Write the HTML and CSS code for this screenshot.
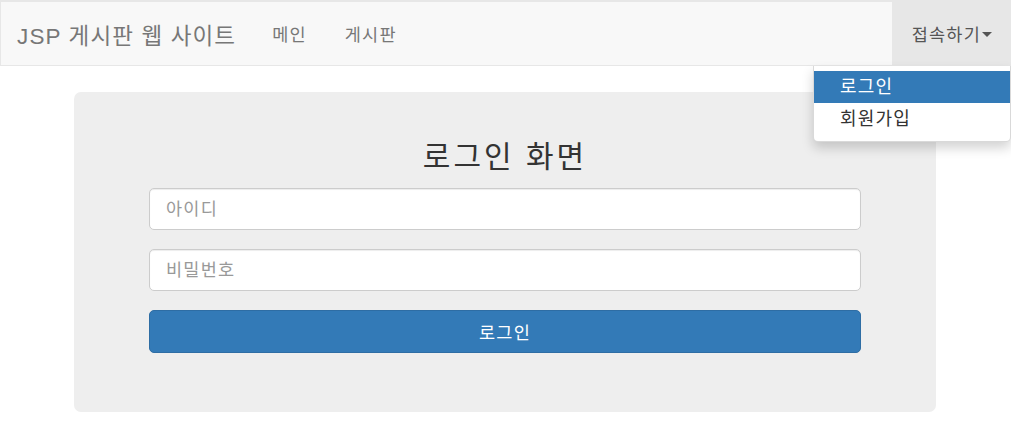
FILE: index.html
```html
<!DOCTYPE html>
<html>
<head>
    <meta charset="utf-8">
    <title>JSP 게시판 웹 사이트</title>
    <link rel="stylesheet" href="styles.css">
</head>
<body>
    <nav class="navbar">
        <a class="brand" href="#">JSP 게시판 웹 사이트</a>
        <ul class="nav">
            <li><a href="#">메인</a></li>
            <li><a href="#">게시판</a></li>
        </ul>
        <ul class="nav nav-right">
            <li class="dropdown open">
                <a href="#" class="dropdown-toggle">접속하기<span class="caret"></span></a>
                <ul class="dropdown-menu">
                    <li class="active"><a href="#">로그인</a></li>
                    <li><a href="#">회원가입</a></li>
                </ul>
            </li>
        </ul>
    </nav>

    <div class="container">
        <div class="jumbotron">
            <form>
                <h3>로그인 화면</h3>
                <div class="form-group">
                    <input type="text" class="form-control" placeholder="아이디" maxlength="20">
                </div>
                <div class="form-group">
                    <input type="password" class="form-control" placeholder="비밀번호" maxlength="20">
                </div>
                <button type="button" class="btn-primary">로그인</button>
            </form>
        </div>
    </div>
</body>
</html>
```

FILE: styles.css
```css
body {
    margin: 0;
    font-family: "Liberation Sans", "Noto Sans CJK KR", sans-serif;
    font-size: 17.5px;
    letter-spacing: 0.07em;
    color: #333;
    background: #fff;
}

a {
    text-decoration: none;
}

.navbar {
    display: flex;
    align-items: stretch;
    height: 63px;
    background: #f8f8f8;
    border: 1px solid #e7e7e7;
    border-top-width: 2px;
}

.brand {
    display: flex;
    align-items: center;
    padding: 0 17px 0 16px;
    font-size: 22.5px;
    letter-spacing: 0.05em;
    color: #777;
}

.nav {
    display: flex;
    margin: 0;
    padding: 0;
    list-style: none;
}

.nav > li {
    position: relative;
    display: flex;
}

.nav > li > a {
    display: flex;
    align-items: center;
    padding: 0 19px;
    color: #777;
}

.nav-right {
    margin-left: auto;
}

.nav-right > li > a {
    padding: 0 18px 0 20px;
    margin-top: -1px;
    background: #e7e7e7;
    color: #555;
}

.caret {
    display: inline-block;
    width: 0;
    height: 0;
    margin-left: 1px;
    margin-top: 2px;
    border-top: 5px solid #555;
    border-left: 5px solid transparent;
    border-right: 5px solid transparent;
}

.dropdown-menu {
    position: absolute;
    top: 100%;
    right: -1px;
    width: 196px;
    margin: 1px 0 0;
    padding: 5px 0 6px;
    list-style: none;
    background: #fff;
    border: 1px solid rgba(0, 0, 0, 0.15);
    border-top: 0;
    border-radius: 0 0 5px 5px;
    box-shadow: 0 6px 12px rgba(0, 0, 0, 0.175);
    z-index: 10;
}

.dropdown-menu a {
    display: block;
    padding: 3px 26px;
    line-height: 26px;
    font-size: 18px;
    color: #333;
}

.dropdown-menu .active a {
    background: #337ab7;
    color: #fff;
}

.container {
    width: 862px;
    margin: 26px 75px 0 74px;
}

.jumbotron {
    height: 320px;
    box-sizing: border-box;
    padding: 47px 75px 0;
    background: #eee;
    border-radius: 7px;
}

h3 {
    margin: 0 0 13px;
    text-align: center;
    font-size: 30px;
    font-weight: 400;
    line-height: 36px;
    letter-spacing: 0.1em;
    color: #333;
}

.form-group {
    margin-bottom: 19px;
}

.form-control {
    display: block;
    width: 100%;
    height: 42px;
    box-sizing: border-box;
    padding: 7px 16px;
    font-family: "Liberation Sans", "Noto Sans CJK KR", sans-serif;
    font-size: 17.5px;
    letter-spacing: 0.07em;
    color: #555;
    background: #fff;
    border: 1px solid #ccc;
    border-radius: 5px;
    box-shadow: inset 0 1px 1px rgba(0, 0, 0, 0.075);
}

.form-control::placeholder {
    color: #999;
}

.btn-primary {
    display: block;
    width: 100%;
    height: 43px;
    font-family: "Liberation Sans", "Noto Sans CJK KR", sans-serif;
    font-size: 17.5px;
    letter-spacing: 0.07em;
    color: #fff;
    background: #337ab7;
    border: 1px solid #2e6da4;
    border-radius: 5px;
}
```
